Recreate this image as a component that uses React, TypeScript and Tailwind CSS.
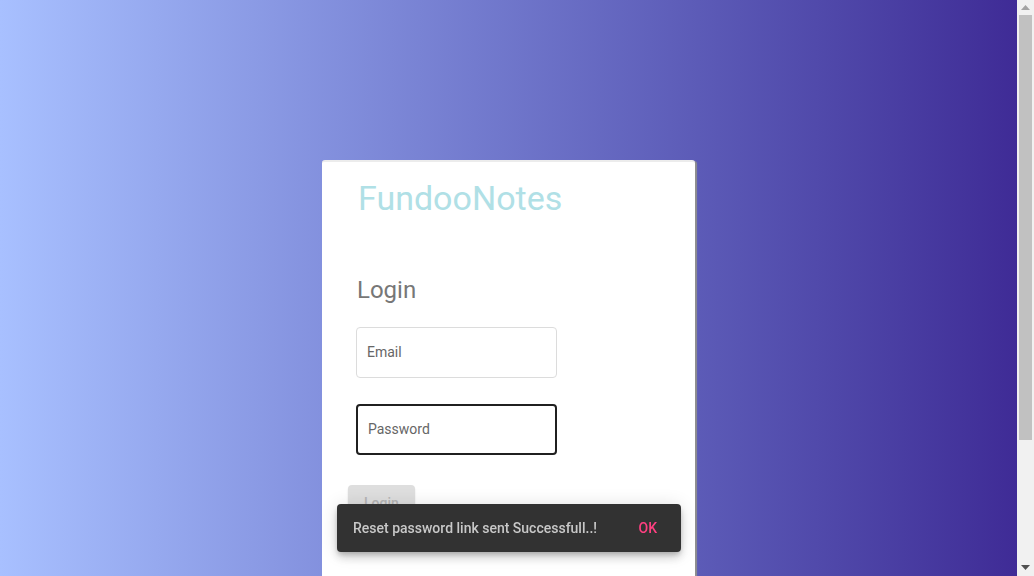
import React from 'react';

function OutlinedField({ label, type, focused }: { label: string; type: string; focused?: boolean }) {
  return (
    <div
      className={`w-[201px] h-[51px] rounded-[4px] flex items-center px-[10px] bg-white ${
        focused ? 'border-2 border-[#202020]' : 'border border-[#dcdcdc]'
      }`}
    >
      <input
        type={type}
        placeholder={label}
        className="w-full bg-transparent outline-none text-[14px] text-[#333] placeholder:text-[#666]"
      />
    </div>
  );
}

function Scrollbar() {
  return (
    <div className="w-[17px] h-full bg-[#f1f1f1] flex flex-col items-center">
      <div className="h-[15px] flex items-center justify-center">
        <svg width="9" height="5" viewBox="0 0 9 5">
          <path d="M0 5 L4.5 0 L9 5 Z" fill="#a3a3a3" />
        </svg>
      </div>
      <div className="w-[13px] h-[425px] bg-[#c1c1c1]" />
      <div className="flex-1" />
      <div className="h-[17px] flex items-center justify-center">
        <svg width="9" height="5" viewBox="0 0 9 5">
          <path d="M0 0 L9 0 L4.5 5 Z" fill="#505050" />
        </svg>
      </div>
    </div>
  );
}

export default function App() {
  return (
    <div className="h-[576px] w-full flex overflow-hidden" style={{ fontFamily: 'Roboto, "Liberation Sans", sans-serif' }}>
      <div className="flex-1 h-[735px] bg-gradient-to-r from-[#a8c0ff] to-[#3f2b96] pt-[160px]">
        <div className="mx-auto w-[373px] h-[515px] bg-white rounded-[3px] border-t-2 border-[#ececec] shadow-[2px_1px_1px_#8f8f8f] px-[34px] pt-[12px]">
          <h1 className="ml-[2px] text-[34px] leading-[48px] text-[#b0e0e6] font-normal">FundooNotes</h1>

          <h2 className="ml-[1px] mt-[52px] text-[24px] leading-[32px] text-[#777]">Login</h2>

          <div className="mt-[21px] flex flex-col gap-[26px]">
            <OutlinedField label="Email" type="email" />
            <OutlinedField label="Password" type="password" focused />
          </div>

          <button
            disabled
            className="mt-[30px] -ml-[8px] h-[36px] px-[16px] rounded-[4px] bg-[#dedede] text-[#b5b5b5] text-[14px] font-medium shadow-[0_2px_2px_rgba(0,0,0,0.14)]"
          >
            Login
          </button>

          <p className="mt-[6px] text-center text-[14px] text-[#3f2b96] pr-[20px]">Forgot password?</p>
        </div>
      </div>

      <Scrollbar />

      <div className="fixed left-[337px] top-[504px] w-[344px] h-[48px] rounded-[4px] bg-[#323232] flex items-center justify-between pl-[16px] pr-[24px] shadow-[0_3px_5px_-1px_rgba(0,0,0,0.2),0_6px_10px_0_rgba(0,0,0,0.14),0_1px_18px_0_rgba(0,0,0,0.12)]">
        <span className="text-[14px] text-[#c8c8c8] font-medium">Reset password link sent Successfull..!</span>
        <button className="text-[14px] font-medium text-[#ff4081]">OK</button>
      </div>
    </div>
  );
}
